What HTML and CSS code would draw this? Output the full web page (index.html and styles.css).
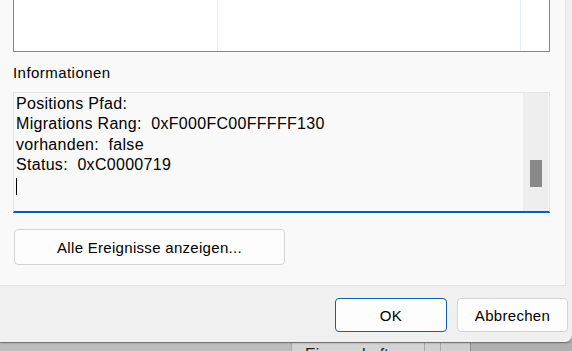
FILE: index.html
```html
<!DOCTYPE html>
<html lang="de">
<head>
    <meta charset="UTF-8">
    <title>Ereigniseigenschaften</title>
    <link rel="stylesheet" href="styles.css">
</head>
<body>

    <div class="dialog">
        <!-- Main pane -->
        <div class="pane">
            <div class="list">
                <div class="col col-1"></div>
                <div class="col col-2"></div>
                <div class="col col-3"></div>
            </div>

            <div class="label">Informationen</div>

            <div class="info-box">
                <div class="info-text">
                    <div>Positions Pfad:</div>
                    <div>Migrations Rang:&nbsp; 0xF000FC00FFFFF130</div>
                    <div>vorhanden:&nbsp; false</div>
                    <div>Status:&nbsp; 0xC0000719</div>
                    <div><span class="caret"></span></div>
                </div>
                <div class="scrollbar">
                    <div class="thumb"></div>
                </div>
            </div>

            <button class="btn btn-wide">Alle Ereignisse anzeigen...</button>
        </div>

        <!-- Footer buttons -->
        <div class="footer">
            <button class="btn btn-ok">OK</button>
            <button class="btn btn-cancel">Abbrechen</button>
        </div>
    </div>

    <!-- Window behind the dialog -->
    <div class="desk">
        <div class="desk-cell desk-a"></div>
        <div class="desk-cell desk-b"><span>Eigenschaften</span></div>
        <div class="desk-cell desk-c"></div>
        <div class="desk-cell desk-d"></div>
        <div class="desk-cell desk-e"></div>
    </div>

</body>
</html>
```

FILE: styles.css
```css
body {
    margin: 0;
    width: 572px;
    height: 351px;
    overflow: hidden;
    background-color: #b4b4b4;
    font-family: "Liberation Sans", Arial, sans-serif;
    font-size: 16px;
    color: #000;
}
.dialog {
    height: 342px;
    background-color: #f0f0f0;
    border-bottom-right-radius: 7px;
    box-shadow: 0 1px 2px rgba(0, 0, 0, 0.35);
    position: relative;
    z-index: 1;
}
.pane {
    box-sizing: border-box;
    width: 566px;
    height: 286px;
    padding-left: 13px;
    background-color: #f9f9f9;
    border-right: 1px solid #e3e3e3;
    border-bottom: 1px solid #e3e3e3;
}
.list {
    box-sizing: border-box;
    width: 537px;
    height: 52px;
    background-color: white;
    border: 1px solid #858585;
    border-top: none;
    display: flex;
}
.col {
    height: 51px;
}
.col-1 {
    width: 203px;
    border-right: 1px solid #e8eef4;
}
.col-2 {
    width: 302px;
    border-right: 1px solid #e8eef4;
}
.label {
    margin-top: 11px;
    line-height: 20px;
    font-size: 15px;
    letter-spacing: 0.45px;
}
.info-box {
    box-sizing: border-box;
    width: 537px;
    height: 121px;
    margin-top: 9px;
    border: 1px solid #e3e3e3;
    border-bottom: 2px solid #005fb8;
    background-color: #f9f9f9;
    display: flex;
}
.info-text {
    flex: 1;
    padding-left: 2px;
    padding-top: 1px;
    line-height: 20.3px;
    letter-spacing: 0.3px;
}
.caret {
    display: inline-block;
    width: 1px;
    height: 17px;
    margin-top: 3px;
    background-color: #000;
    vertical-align: top;
}
.scrollbar {
    width: 25px;
    margin-right: 1px;
    background-color: #eeeeee;
    padding-top: 67px;
    box-sizing: border-box;
}
.thumb {
    width: 12px;
    height: 27px;
    margin-left: 7px;
    background-color: #898989;
}
.btn {
    box-sizing: border-box;
    font-family: "Liberation Sans", Arial, sans-serif;
    font-size: 15px;
    color: #000;
    background-color: #fdfdfd;
    border: 1px solid #d3d3d3;
    border-radius: 4px;
    letter-spacing: 0.3px;
    padding: 0;
}
.btn-wide {
    display: block;
    width: 271px;
    height: 36px;
    margin-top: 16px;
    margin-left: 1px;
}
.footer {
    display: flex;
    justify-content: flex-end;
    gap: 10px;
    padding: 12px 4px 0 0;
}
.btn-ok {
    width: 112px;
    height: 34px;
    border-color: #0a5eb0;
}
.btn-cancel {
    width: 111px;
    height: 34px;
}
.desk {
    display: flex;
    height: 9px;
    border-top: 1px solid #9c9c9c;
    box-sizing: border-box;
}
.desk-cell {
    height: 100%;
    overflow: hidden;
}
.desk-a {
    width: 291px;
    background-color: #bdbdbd;
}
.desk-b {
    width: 132px;
    background-color: #d4d4d4;
    border-left: 1px solid #a8a8a8;
    border-right: 1px solid #a8a8a8;
}
.desk-b span {
    display: block;
    margin-top: 4px;
    margin-left: 13px;
    font-size: 16px;
    line-height: 16px;
    color: #222;
}
.desk-c {
    width: 15px;
    background-color: #d0d0d0;
    border-right: 1px solid #a8a8a8;
}
.desk-d {
    width: 29px;
    background-color: #cfcfcf;
    border-right: 1px solid #8c8c8c;
}
.desk-e {
    flex: 1;
    background-color: #b0b0b0;
}
```
